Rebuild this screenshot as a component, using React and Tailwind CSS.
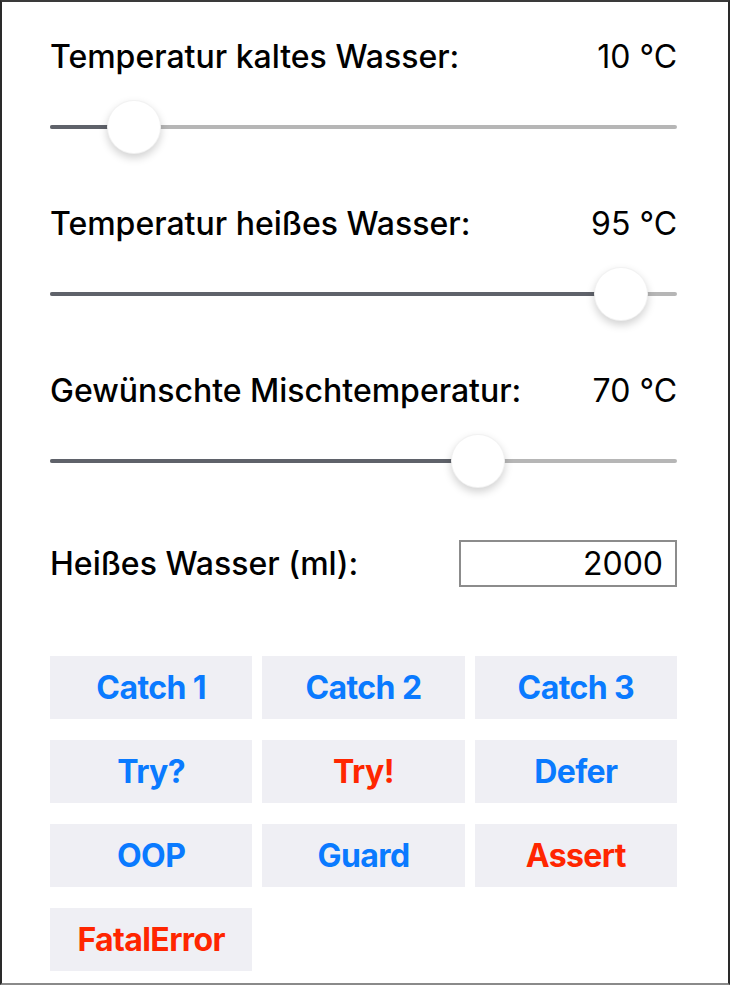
import { useState } from "react";

const sliders = [
  { id: "cold", label: "Temperatur kaltes Wasser:", value: 10 },
  { id: "hot", label: "Temperatur heißes Wasser:", value: 95 },
  { id: "mix", label: "Gewünschte Mischtemperatur:", value: 70 },
];

const buttons = [
  { text: "Catch 1", red: false },
  { text: "Catch 2", red: false },
  { text: "Catch 3", red: false },
  { text: "Try?", red: false },
  { text: "Try!", red: true },
  { text: "Defer", red: false },
  { text: "OOP", red: false },
  { text: "Guard", red: false },
  { text: "Assert", red: true },
  { text: "FatalError", red: true },
];

function Slider({ value }) {
  // thumb center runs from 27px to (width - 27px)
  const pos = `calc(27px + (100% - 54px) * ${value / 100})`;
  return (
    <div className="relative h-[60px] flex items-center">
      <div className="w-full h-[4px] rounded-full bg-[#b6b6b6]" />
      <div
        className="absolute left-0 h-[4px] rounded-full bg-[#5f626a]"
        style={{ width: pos }}
      />
      <div
        className="absolute top-[3px] w-[54px] h-[54px] -translate-x-1/2 rounded-full bg-white border border-black/5 shadow-[0_4px_9px_rgba(0,0,0,0.18)]"
        style={{ left: pos }}
      />
    </div>
  );
}

export default function App() {
  const [values] = useState(sliders);

  return (
    <div
      className="w-[730px] h-[985px] bg-white border-t-2 border-l-2 border-r-2 border-b-2 border-t-[#3a3a3a] border-l-[#2a2a2a] border-r-[#2a2a2a] border-b-[#8a8a8a] pl-[48px] pr-[51px] pt-[35px] text-black"
      style={{ fontFamily: "Inter, 'Liberation Sans', sans-serif" }}
    >
      {values.map((s, i) => (
        <div key={s.id} className={i > 0 ? "mt-[47px]" : ""}>
          <div className="h-[40px] flex items-center justify-between text-[32px]">
            <span className="font-medium">{s.label}</span>
            <span>{s.value} °C</span>
          </div>
          <div className="mt-[20px]">
            <Slider value={s.value} />
          </div>
        </div>
      ))}

      <div className="mt-[49px] h-[47px] flex items-center justify-between text-[32px]">
        <span className="font-medium">Heißes Wasser (ml):</span>
        <div className="w-[218px] h-[47px] border-2 border-[#8c8c8c] flex items-center justify-end px-[12px]">
          2000
        </div>
      </div>

      <div className="mt-[69px] grid grid-cols-3 gap-x-[10px] gap-y-[21px]">
        {buttons.map((b) => (
          <div
            key={b.text}
            className={
              "h-[63px] bg-[#efeff4] flex items-center justify-center text-[32px] font-bold tracking-[-0.6px] " +
              (b.red ? "text-[#ff2600]" : "text-[#0a7aff]")
            }
          >
            {b.text}
          </div>
        ))}
      </div>
    </div>
  );
}
